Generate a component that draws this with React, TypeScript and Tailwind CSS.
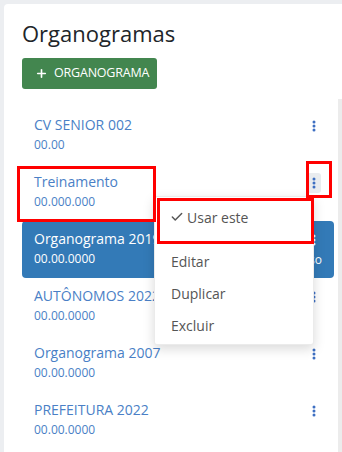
import { Plus, Check } from 'lucide-react'

type Org = { id: number; name: string; code: string; active?: boolean; open?: boolean }

const orgs: Org[] = [
  { id: 1, name: 'CV SENIOR 002', code: '00.00' },
  { id: 2, name: 'Treinamento', code: '00.000.000', open: true },
  { id: 3, name: 'Organograma 2019', code: '00.00.0000', active: true },
  { id: 4, name: 'AUTÔNOMOS 2022', code: '00.00.0000' },
  { id: 5, name: 'Organograma 2007', code: '00.00.0000' },
  { id: 6, name: 'PREFEITURA 2022', code: '00.00.0000' },
]

function Kebab({ color }: { color: string }) {
  return (
    <svg width="4" height="12" viewBox="0 0 4 12" className={color}>
      <circle cx="2" cy="2" r="1.5" fill="currentColor" />
      <circle cx="2" cy="6" r="1.5" fill="currentColor" />
      <circle cx="2" cy="10" r="1.5" fill="currentColor" />
    </svg>
  )
}

export default function App() {
  return (
    <div className="relative w-[342px] h-[452px] overflow-hidden bg-[#eceef1] pl-[4px] pt-[4px] font-['Open_Sans',sans-serif]">
      <div className="h-full bg-white rounded-tl-[4px] flex flex-col">
        {/* Header */}
        <div className="pl-[18px] pt-[14px]">
          <h1 className="text-[22px] leading-[30px] text-[#212529]">Organogramas</h1>
          <button className="mt-[10px] flex items-center gap-[6px] h-[31px] w-[135px] pl-[13px] bg-[#43864f] rounded-[3px] text-white text-[12.5px] tracking-[-0.2px]">
            <Plus className="w-[13px] h-[13px]" strokeWidth={3} />
            ORGANOGRAMA
          </button>
        </div>

        {/* List */}
        <div className="mt-[10px] flex flex-1 min-h-0">
          <div className="pl-[18px] pt-[8px] w-[330px]">
            {orgs.map((o) => (
              <div
                key={o.id}
                className={`relative h-[57px] px-3 pt-[8px] ${o.active ? 'bg-[#337ab7] rounded-[4px] text-white' : 'text-[#4a7fc6]'}`}
              >
                <div className="text-[14px] leading-[20px]">{o.name}</div>
                <div className="text-[12px] leading-[20px]">{o.code}</div>
                <div
                  className={`absolute right-[13px] top-[9px] w-[15px] h-[20px] rounded-[3px] flex items-center justify-center ${o.open ? 'bg-[#e9ecef]' : ''}`}
                >
                  <Kebab color={o.active ? 'text-white' : 'text-[#3d6fc2]'} />
                </div>
                {o.active && (
                  <span className="absolute right-[12px] top-[29px] text-[12px] leading-[20px]">Em uso</span>
                )}
              </div>
            ))}
          </div>
          <div className="ml-auto w-[4px] bg-[#ececec]" />
        </div>
      </div>

      {/* Dropdown menu */}
      <div className="absolute left-[154px] top-[196px] w-[160px] h-[149px] bg-white border border-[#00000014] rounded-[3px] shadow-[0_4px_12px_rgba(0,0,0,0.15)] py-[4px] text-[14px] text-[#555]">
        <div className="h-[32px] flex items-center pl-[15px] gap-[3px]">
          <Check className="w-[14px] h-[14px] text-[#555]" strokeWidth={2.5} />
          Usar este
        </div>
        <div className="h-[12px]" />
        <div className="h-[32px] flex items-center pl-[16px]">Editar</div>
        <div className="h-[32px] flex items-center pl-[16px]">Duplicar</div>
        <div className="h-[32px] flex items-center pl-[16px]">Excluir</div>
      </div>

      {/* Annotation boxes */}
      <div className="absolute left-[17px] top-[166px] w-[139px] h-[56px] border-[3px] border-[#ff0000]" />
      <div className="absolute left-[306px] top-[161px] w-[26px] h-[37px] border-[3px] border-[#ff0000]" />
      <div className="absolute left-[157px] top-[198px] w-[157px] h-[46px] border-[3px] border-[#ff0000]" />
    </div>
  )
}
